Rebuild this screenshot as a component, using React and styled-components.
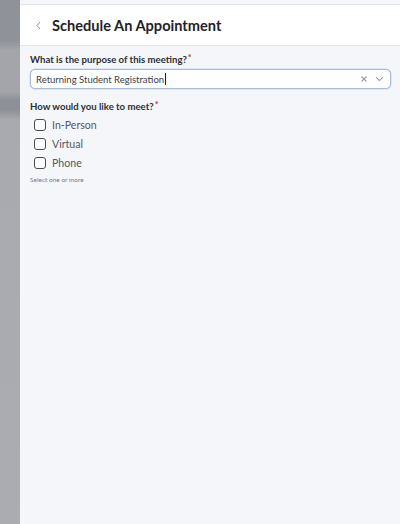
import React from 'react';
import styled, { createGlobalStyle } from 'styled-components';

const GlobalStyle = createGlobalStyle`
  html, body {
    margin: 0;
    padding: 0;
    height: 100%;
  }
  body {
    font-family: Lato, "Open Sans", Arial, sans-serif;
    background: #a7a9ae;
  }
`;

const options = ['In-Person', 'Virtual', 'Phone'];

const App = () => {
  return (
    <>
      <GlobalStyle />
      <Page>
        <Backdrop />
        <Panel>
          <Header>
            <BackButton>
              <svg width='7' height='9' viewBox='0 0 7 9'>
                <path d='M5 1 L2 4.5 L5 8' fill='none' stroke='#8c8f96' strokeWidth='1' />
              </svg>
            </BackButton>
            <Title>Schedule An Appointment</Title>
          </Header>

          <Body>
            <Field>
              <Label>
                What is the purpose of this meeting?<Required>*</Required>
              </Label>
              <SelectBox>
                <SelectValue>
                  Returning Student Registration<Caret />
                </SelectValue>
                <SelectIcons>
                  <svg width='8' height='8' viewBox='0 0 8 8'>
                    <path d='M1.5 1.5 L6.5 6.5 M6.5 1.5 L1.5 6.5' stroke='#9a9ca2' strokeWidth='1.1' />
                  </svg>
                  <svg width='9' height='6' viewBox='0 0 9 6'>
                    <path d='M1 1.2 L4.5 4.6 L8 1.2' fill='none' stroke='#9a9ca2' strokeWidth='1.1' />
                  </svg>
                </SelectIcons>
              </SelectBox>
            </Field>

            <Field $gap='12px'>
              <Label>
                How would you like to meet?<Required>*</Required>
              </Label>
              <CheckList>
                {options.map((opt) => (
                  <CheckRow key={opt}>
                    <CheckBox />
                    <CheckLabel>{opt}</CheckLabel>
                  </CheckRow>
                ))}
              </CheckList>
              <Hint>Select one or more</Hint>
            </Field>
          </Body>
        </Panel>
      </Page>
    </>
  );
};

export default App;

// 전체 페이지
const Page = styled.div`
  display: flex;
  width: 400px;
  height: 524px;
  overflow: hidden;
`;

// 왼쪽 회색 배경
const Backdrop = styled.div`
  width: 20px;
  flex-shrink: 0;
  background: linear-gradient(
    to bottom,
    #8f9298 0px,
    #8f9298 40px,
    #a3a5aa 50px,
    #a3a5aa 92px,
    #8d9096 100px,
    #8d9096 110px,
    #a8aaaf 120px,
    #aaacb1 100%
  );
`;

const Panel = styled.div`
  flex: 1;
  display: flex;
  flex-direction: column;
  background-color: #f4f6fa;
`;

const Header = styled.div`
  display: flex;
  align-items: center;
  height: 40px;
  margin-top: 4px;
  border-top: 1px solid #e4e5e8;
  border-bottom: 1px solid #e3e5e9;
  background-color: #ffffff;
  padding-left: 15px;
`;

const BackButton = styled.div`
  display: flex;
  align-items: center;
  width: 17px;
  height: 12px;
`;

const Title = styled.h1`
  margin: 0;
  font-size: 14.6px;
  font-weight: 700;
  color: #1f2228;
`;

const Body = styled.div`
  display: flex;
  flex-direction: column;
  padding: 8px 9px 0 10px;
`;

const Field = styled.div`
  display: flex;
  flex-direction: column;
  margin-top: ${(props) => props.$gap || '0px'};
`;

const Label = styled.div`
  font-size: 9.6px;
  font-weight: 700;
  color: #2b2e34;
  line-height: 12px;
  margin-bottom: 3px;
`;

const Required = styled.span`
  color: #d0312d;
  font-size: 9px;
  vertical-align: top;
  position: relative;
  top: -2px;
  margin-left: 1px;
`;

const SelectBox = styled.div`
  display: flex;
  align-items: center;
  justify-content: space-between;
  height: 18px;
  border: 1px solid #a7bcd6;
  border-radius: 5px;
  background-color: #ffffff;
  padding: 0 6px 0 5px;
  box-shadow: 0 0 0 0.5px #c9d6e6;
`;

const SelectValue = styled.div`
  display: flex;
  align-items: center;
  font-size: 9.5px;
  color: #3a3d43;
`;

const Caret = styled.span`
  display: inline-block;
  width: 1px;
  height: 12px;
  background-color: #222;
  margin-left: 1px;
`;

const SelectIcons = styled.div`
  display: flex;
  align-items: center;
  gap: 7px;
`;

const CheckList = styled.div`
  display: flex;
  flex-direction: column;
  gap: 7px;
  padding-left: 4px;
  margin-top: 3px;
`;

const CheckRow = styled.div`
  display: flex;
  align-items: center;
  gap: 6px;
`;

const CheckBox = styled.div`
  width: 10px;
  height: 10px;
  border: 1px solid #4b4e55;
  border-radius: 3px;
  background-color: #ffffff;
`;

const CheckLabel = styled.div`
  font-size: 10.6px;
  color: #55585e;
  line-height: 12px;
`;

const Hint = styled.div`
  font-size: 6.5px;
  color: #777a80;
  margin-top: 7px;
`;
